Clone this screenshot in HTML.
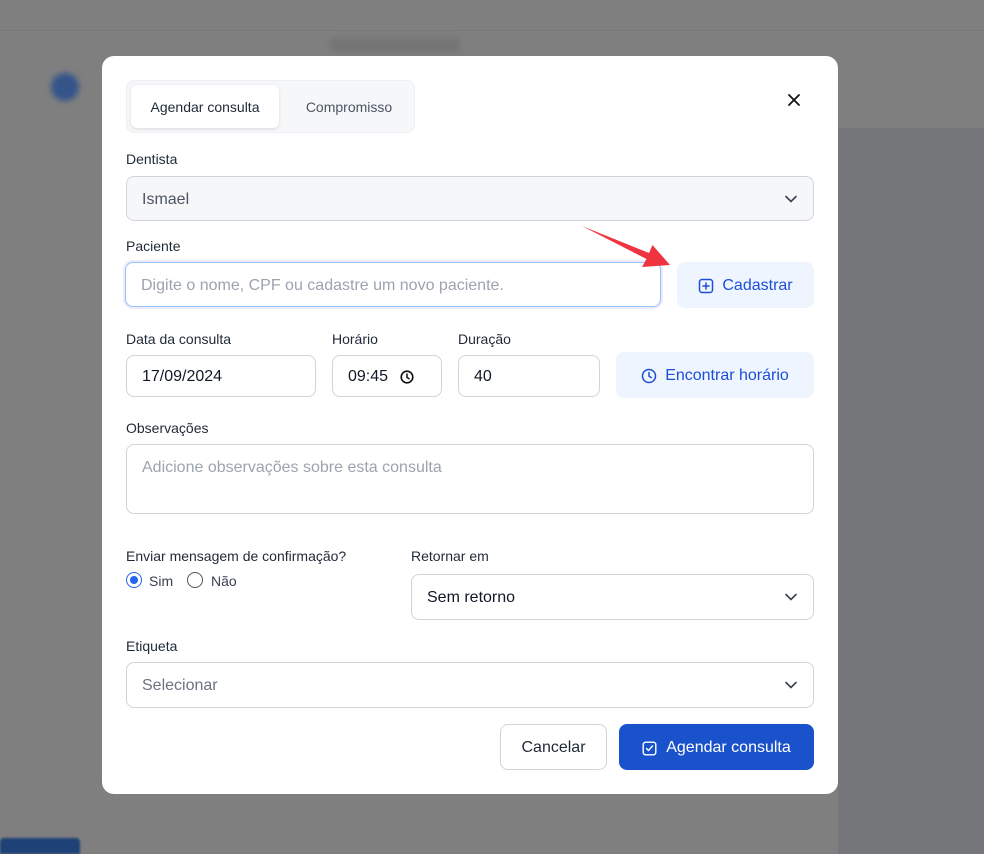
<!DOCTYPE html>
<html><head><meta charset="utf-8"><style>
*{box-sizing:border-box;margin:0;padding:0}
body{width:984px;height:854px;overflow:hidden;background:#7f7f7f;font-family:"Liberation Sans",sans-serif;position:relative;color:#1f2937}
.abs{position:absolute}
.modal{position:absolute;left:102px;top:56px;width:736px;height:738px;background:#fff;border-radius:12px}
.lbl{position:absolute;font-size:14px;color:#1f2937;line-height:16px}
.box{position:absolute;border:1px solid #d1d5db;border-radius:8px;background:#fff;font-size:16px;display:flex;align-items:center;padding-left:15px;padding-top:2px;color:#111827}
.chev{position:absolute;right:16px;top:50%;margin-top:-4px}
.btn{position:absolute;border-radius:8px;display:flex;align-items:center;justify-content:center;font-size:16px;padding-top:2px}
</style></head><body>
<div class="abs" style="left:0;top:30px;width:984px;height:1px;background:#787878"></div>
<div class="abs" style="left:330px;top:38px;width:130px;height:14px;background:#747474;border-radius:4px;filter:blur(3px)"></div>
<div class="abs" style="left:51px;top:73px;width:28px;height:28px;border-radius:50%;background:#34548a;filter:blur(3px)"></div>
<div class="abs" style="left:838px;top:128px;width:146px;height:726px;background:#76777a"></div>
<div class="abs" style="left:0;top:838px;width:80px;height:16px;background:#1e4178;border-radius:4px 4px 0 0;filter:blur(1px)"></div>

<div class="modal"></div>
<div class="abs" style="left:126px;top:80px;width:289px;height:53px;background:#f6f7f9;border:1px solid #eef0f3;border-radius:8px"></div>
<div class="abs" style="left:131px;top:85px;width:148px;height:43px;background:#fff;border-radius:6px;box-shadow:0 1px 3px rgba(0,0,0,.12);font-size:14px;display:flex;align-items:center;justify-content:center;color:#1f2937">Agendar consulta</div>
<div class="abs" style="left:287px;top:85px;width:124px;height:43px;font-size:14px;display:flex;align-items:center;justify-content:center;color:#4b5563">Compromisso</div>
<svg class="abs" style="left:787px;top:93px" width="14" height="14" viewBox="0 0 14 14"><path d="M2 2L12 12M12 2L2 12" stroke="#111" stroke-width="1.8" stroke-linecap="round"/></svg>

<div class="lbl" style="left:126px;top:151px">Dentista</div>
<div class="box" style="left:126px;top:176px;width:688px;height:45px;background:#f6f7f9;color:#4b5563">Ismael<svg class="chev" width="12" height="8" viewBox="0 0 12 8"><path d="M1 1.5L6 6.5L11 1.5" stroke="#374151" stroke-width="1.6" fill="none" stroke-linecap="round"/></svg></div>

<div class="lbl" style="left:126px;top:238px">Paciente</div>
<div class="box" style="left:125px;top:262px;width:536px;height:45px;border:1px solid #93c5fd;box-shadow:0 0 0 2px #efe9fb;color:#9ca3af">Digite o nome, CPF ou cadastre um novo paciente.</div>
<div class="btn" style="left:677px;top:262px;width:137px;height:46px;background:#eef5fe;color:#1d4ed8"><svg width="16" height="16" viewBox="0 0 16 16" style="margin-right:8px"><rect x="1.5" y="1.5" width="13" height="13" rx="2.5" stroke="#1d4ed8" stroke-width="1.5" fill="none"/><path d="M8 5v6M5 8h6" stroke="#1d4ed8" stroke-width="1.5" stroke-linecap="round"/></svg>Cadastrar</div>
<svg class="abs" style="left:0;top:0" width="984" height="854"><path d="M582 226 L649 253 L652.5 245 L670 265 L642 267 L646.5 259 Z" fill="#ef3340"/></svg>

<div class="lbl" style="left:126px;top:331px">Data da consulta</div>
<div class="lbl" style="left:332px;top:331px">Horário</div>
<div class="lbl" style="left:458px;top:331px">Duração</div>
<div class="box" style="left:126px;top:355px;width:190px;height:42px">17/09/2024</div>
<div class="box" style="left:332px;top:355px;width:110px;height:42px">09:45<svg width="14" height="14" viewBox="0 0 14 14" style="margin-left:12px"><circle cx="7" cy="7" r="5.8" stroke="#111" stroke-width="1.6" fill="none"/><path d="M7 4v3.3l2 1.4" stroke="#111" stroke-width="1.5" fill="none" stroke-linecap="round"/></svg></div>
<div class="box" style="left:458px;top:355px;width:142px;height:42px">40</div>
<div class="btn" style="left:616px;top:352px;width:198px;height:46px;background:#eef5fe;color:#1d4ed8"><svg width="16" height="16" viewBox="0 0 16 16" style="margin-right:8px"><circle cx="8" cy="8" r="6.5" stroke="#1d4ed8" stroke-width="1.5" fill="none"/><path d="M8 4.5v3.7l2.3 1.4" stroke="#1d4ed8" stroke-width="1.5" fill="none" stroke-linecap="round"/></svg>Encontrar horário</div>

<div class="lbl" style="left:126px;top:420px">Observações</div>
<div class="box" style="left:126px;top:444px;width:688px;height:70px;align-items:flex-start;padding-top:14px;color:#9ca3af">Adicione observações sobre esta consulta</div>

<div class="lbl" style="left:126px;top:548px">Enviar mensagem de confirmação?</div>
<div class="abs" style="left:126px;top:572px;width:16px;height:16px;border-radius:50%;border:1.5px solid #2563eb"><div style="position:absolute;left:2.5px;top:2.5px;width:8px;height:8px;border-radius:50%;background:#2563eb"></div></div>
<div class="lbl" style="left:149px;top:573px;color:#374151">Sim</div>
<div class="abs" style="left:187px;top:572px;width:16px;height:16px;border-radius:50%;border:1.3px solid #4b5563"></div>
<div class="lbl" style="left:211px;top:573px;color:#374151">Não</div>

<div class="lbl" style="left:411px;top:548px">Retornar em</div>
<div class="box" style="left:411px;top:574px;width:403px;height:46px">Sem retorno<svg class="chev" width="12" height="8" viewBox="0 0 12 8"><path d="M1 1.5L6 6.5L11 1.5" stroke="#374151" stroke-width="1.6" fill="none" stroke-linecap="round"/></svg></div>

<div class="lbl" style="left:126px;top:638px">Etiqueta</div>
<div class="box" style="left:126px;top:662px;width:688px;height:46px;color:#6b7280">Selecionar<svg class="chev" width="12" height="8" viewBox="0 0 12 8"><path d="M1 1.5L6 6.5L11 1.5" stroke="#374151" stroke-width="1.6" fill="none" stroke-linecap="round"/></svg></div>

<div class="btn" style="left:500px;top:724px;width:107px;height:46px;border:1px solid #d1d5db;background:#fff;color:#1f2937">Cancelar</div>
<div class="btn" style="left:619px;top:724px;width:195px;height:46px;background:#1a52cb;color:#fff"><svg width="15" height="15" viewBox="0 0 15 15" style="margin-right:9px"><rect x="1.2" y="1.2" width="12.6" height="12.6" rx="2.5" stroke="#fff" stroke-width="1.4" fill="none"/><path d="M4.5 7.5l2 2 4-4.5" stroke="#fff" stroke-width="1.4" fill="none" stroke-linecap="round"/></svg>Agendar consulta</div>
</body></html>
